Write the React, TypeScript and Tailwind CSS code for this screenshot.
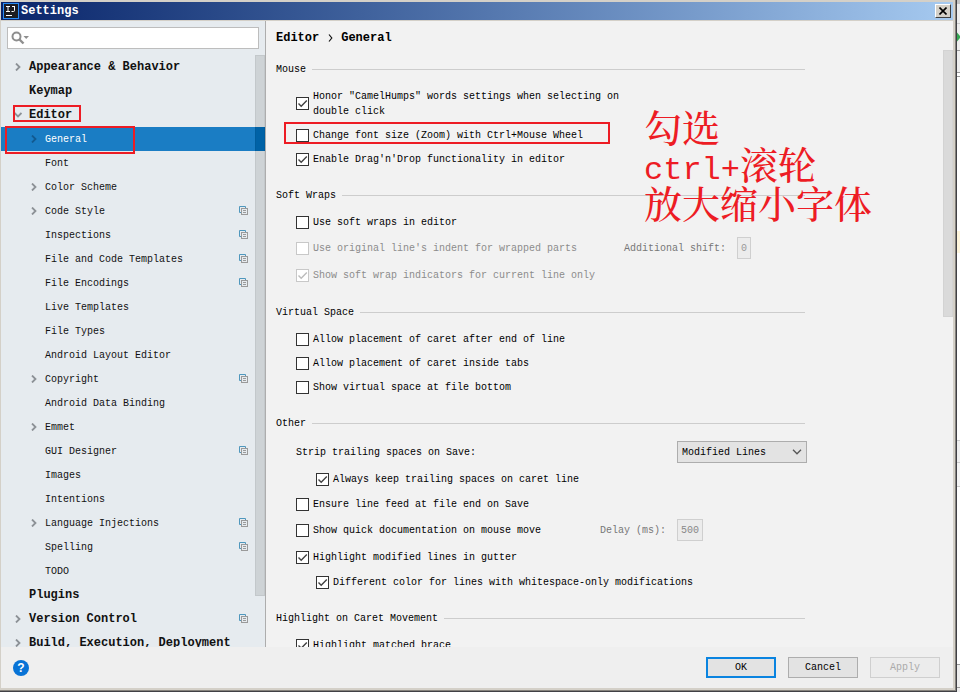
import type { ReactNode } from "react";

type Node = { label: string; level: 0 | 1; arrow?: "right" | "down"; copy?: boolean; selected?: boolean };

const tree: Node[] = [
  { label: "Appearance & Behavior", level: 0, arrow: "right" },
  { label: "Keymap", level: 0 },
  { label: "Editor", level: 0, arrow: "down" },
  { label: "General", level: 1, arrow: "right", selected: true },
  { label: "Font", level: 1 },
  { label: "Color Scheme", level: 1, arrow: "right" },
  { label: "Code Style", level: 1, arrow: "right", copy: true },
  { label: "Inspections", level: 1, copy: true },
  { label: "File and Code Templates", level: 1, copy: true },
  { label: "File Encodings", level: 1, copy: true },
  { label: "Live Templates", level: 1 },
  { label: "File Types", level: 1 },
  { label: "Android Layout Editor", level: 1 },
  { label: "Copyright", level: 1, arrow: "right", copy: true },
  { label: "Android Data Binding", level: 1 },
  { label: "Emmet", level: 1, arrow: "right" },
  { label: "GUI Designer", level: 1, copy: true },
  { label: "Images", level: 1 },
  { label: "Intentions", level: 1 },
  { label: "Language Injections", level: 1, arrow: "right", copy: true },
  { label: "Spelling", level: 1, copy: true },
  { label: "TODO", level: 1 },
  { label: "Plugins", level: 0 },
  { label: "Version Control", level: 0, arrow: "right", copy: true },
  { label: "Build, Execution, Deployment", level: 0, arrow: "right" },
];

function Arrow({ dir, color }: { dir: "right" | "down"; color: string }) {
  return (
    <svg width="8" height="8" viewBox="0 0 8 8" fill="none" stroke={color} strokeWidth="1.8" aria-hidden="true">
      <path d={dir === "right" ? "M2 0.5 L5.5 4 L2 7.5" : "M0.5 2 L4 5.5 L7.5 2"} />
    </svg>
  );
}

function CopyIcon() {
  return (
    <svg width="9" height="10" viewBox="0 0 9 10" fill="none" className="block" aria-hidden="true">
      <path d="M2 6.5 H0.5 V0.5 H6.5 V2" stroke="#4f97bd" />
      <rect x="2.5" y="2.5" width="6" height="6" stroke="#9a9a9a" />
      <path d="M4 4.5 H7 M4 6.5 H7" stroke="#9a9a9a" />
    </svg>
  );
}

function TreeRow({ node }: { node: Node }) {
  const weight = node.level === 0 ? "text-xs font-bold pl-3" : "pl-7";
  const tone = node.selected ? "bg-[#1a7dc4] text-white" : "text-[#111]";
  return (
    <li className={`relative flex h-6 items-center ${weight} ${tone}`}>
      <span className="flex w-4 shrink-0 items-center pl-px">
        {node.arrow && <Arrow dir={node.arrow} color={node.selected ? "#125a90" : "#8c9196"} />}
      </span>
      <span className="flex-1 whitespace-nowrap">{node.label}</span>
      {node.copy && (
        <span className="mr-[17px]">
          <CopyIcon />
        </span>
      )}
      {node.selected && <span className="h-full w-[10px] bg-[#006eb9]" />}
      {node.label === "Editor" && (
        <span className="pointer-events-none absolute top-[2px] left-3 h-[17px] w-[68px] border-2 border-[#ed1c24]" />
      )}
      {node.selected && (
        <span className="pointer-events-none absolute -top-px left-1 z-10 h-7 w-[130px] border-2 border-[#ed1c24]" />
      )}
    </li>
  );
}

function Check({ label, checked = false, disabled = false }: { label: ReactNode; checked?: boolean; disabled?: boolean }) {
  return (
    <label className={`flex items-center gap-1 ${disabled ? "text-[#8c8c8c]" : "text-black"}`}>
      <span className="relative size-[13px] shrink-0">
        <input
          type="checkbox"
          defaultChecked={checked}
          disabled={disabled}
          className={`peer block size-[13px] appearance-none border bg-white ${disabled ? "border-[#c8c8c8]" : "border-[#333]"}`}
        />
        <svg
          viewBox="0 0 13 13"
          className="pointer-events-none absolute inset-0 hidden size-[13px] peer-checked:block"
          fill="none"
          stroke={disabled ? "#bcbcbc" : "#404040"}
          strokeWidth="1.4"
          aria-hidden="true"
        >
          <path d="M2.5 6.5 L5.2 9.2 L10.8 3.6" />
        </svg>
      </span>
      <span>{label}</span>
    </label>
  );
}

function Group({ title, children }: { title: string; children: ReactNode }) {
  return (
    <section className="mt-4">
      <div className="flex h-4 items-center gap-[6px]">
        <h2 className="whitespace-nowrap text-black">{title}</h2>
        <div className="h-px flex-1 bg-[#cdcdcd]" />
      </div>
      <div className="pt-[7px] pl-5">{children}</div>
    </section>
  );
}

function Row({ h = "h-6", children }: { h?: string; children: ReactNode }) {
  return <div className={`flex items-center whitespace-nowrap ${h}`}>{children}</div>;
}

export default function App() {
  return (
    <div className="flex h-screen overflow-hidden bg-white font-['Liberation_Mono','Noto_Sans_CJK_SC',monospace] text-[10px] leading-[15px]">
      <div className="flex min-w-0 flex-1 flex-col border-r border-b border-[#404045] bg-[#d4d0c8] pt-[2px] pr-[3px] pb-[3px] pl-px shadow-[inset_-1px_-1px_#85827c]">
        <header className="mb-px flex h-[18px] shrink-0 items-center bg-linear-to-r from-[#0a246a] to-[#a6caf0] px-[2px]">
          <svg width="16" height="16" viewBox="0 0 16 16" fill="none" aria-hidden="true">
            <rect width="16" height="16" fill="#2a8cf5" />
            <rect x="1" y="1" width="14" height="14" fill="#1c1c22" />
            <path d="M3 3.5 H7 M5 3.5 V8.5 M3 8.5 H7 M9 3.5 H12 M11.5 3.5 V7.5 Q11.5 8.5 10.5 8.5 H8.5" stroke="#fff" />
            <path d="M3 12.5 H9" stroke="#fff" />
          </svg>
          <h1 className="ml-[2px] flex-1 text-xs font-bold text-white">Settings</h1>
          <button
            type="button"
            aria-label="Close"
            className="flex h-[14px] w-4 items-center justify-center border border-t-white border-r-[#404040] border-b-[#404040] border-l-white bg-[#d4d0c8]"
          >
            <svg width="8" height="8" viewBox="0 0 8 8" stroke="#000" strokeWidth="1.6" aria-hidden="true">
              <path d="M0.5 0.5 L7.5 7.5 M7.5 0.5 L0.5 7.5" />
            </svg>
          </button>
        </header>

        <div className="flex min-h-0 flex-1">
          <aside className="relative flex w-[265px] shrink-0 flex-col overflow-hidden border-r border-[#adadad] bg-[#e6ebef]">
            <div className="m-[6px] flex h-[22px] shrink-0 items-center border border-[#bdbdbd] bg-white pl-[3px]">
              <svg width="19" height="14" viewBox="0 0 19 14" fill="none" aria-hidden="true">
                <circle cx="5.5" cy="5.5" r="4" stroke="#8e8e8e" strokeWidth="2" />
                <path d="M8.5 8.5 L12.5 12.5" stroke="#8e8e8e" strokeWidth="2.4" />
                <path d="M12.5 5 H18 L15.2 8 Z" fill="#8e8e8e" />
              </svg>
              <input type="search" aria-label="Search settings" className="h-full min-w-0 flex-1 bg-transparent outline-none" />
            </div>
            <div className="relative min-h-0 flex-1 overflow-hidden">
              <ul>
                {tree.map((node) => (
                  <TreeRow key={node.label} node={node} />
                ))}
              </ul>
              <div className="absolute top-0 right-0 h-[541px] w-[10px] border border-black/5 bg-black/10" />
            </div>
          </aside>

          <main className="relative min-w-0 flex-1 overflow-hidden bg-[#f2f2f2] pr-[148px] pl-[10px]">
            <nav aria-label="Breadcrumb" className="mt-[10px] flex h-[14px] items-center gap-2 text-xs font-bold">
              <span>Editor</span>
              <svg width="6" height="8" viewBox="0 0 6 8" fill="none" stroke="#111" strokeWidth="1.2" aria-hidden="true">
                <path d="M2 0.5 L4.8 4 L2 7.5" />
              </svg>
              <span>General</span>
            </nav>

            <Group title="Mouse">
              <Row h="h-[39px]">
                <Check
                  checked
                  label={
                    <>
                      Honor "CamelHumps" words settings when selecting on
                      <br />
                      double click
                    </>
                  }
                />
              </Row>
              <div className="relative">
                <Row>
                  <Check label="Change font size (Zoom) with Ctrl+Mouse Wheel" />
                </Row>
                <span className="pointer-events-none absolute -top-px -left-3 h-[22px] w-[326px] border-2 border-[#ed1c24]" />
              </div>
              <Row>
                <Check checked label="Enable Drag'n'Drop functionality in editor" />
              </Row>
            </Group>

            <Group title="Soft Wraps">
              <Row>
                <Check label="Use soft wraps in editor" />
              </Row>
              <Row h="h-7">
                <Check disabled label="Use original line's indent for wrapped parts" />
                <label className="ml-[47px] flex items-center gap-[11px] text-[#777]">
                  Additional shift:
                  <input disabled defaultValue="0" className="h-[22px] w-[14px] border border-[#cfcfcf] bg-[#ececec] text-center text-[#999]" />
                </label>
              </Row>
              <Row h="h-[26px]">
                <Check checked disabled label="Show soft wrap indicators for current line only" />
              </Row>
            </Group>

            <Group title="Virtual Space">
              <Row>
                <Check label="Allow placement of caret after end of line" />
              </Row>
              <Row>
                <Check label="Allow placement of caret inside tabs" />
              </Row>
              <Row>
                <Check label="Show virtual space at file bottom" />
              </Row>
            </Group>

            <Group title="Other">
              <Row h="h-7">
                <label htmlFor="strip" className="flex-1">
                  Strip trailing spaces on Save:
                </label>
                <span className="relative -mr-[2px]">
                  <select id="strip" className="block h-[22px] w-[130px] appearance-none border border-[#adadad] bg-[#e3e3e3] pl-1 text-black">
                    <option>Modified Lines</option>
                  </select>
                  <svg
                    width="10"
                    height="6"
                    viewBox="0 0 10 6"
                    fill="none"
                    stroke="#555"
                    strokeWidth="1.3"
                    className="pointer-events-none absolute top-2 right-[5px]"
                    aria-hidden="true"
                  >
                    <path d="M1 0.8 L5 4.8 L9 0.8" />
                  </svg>
                </span>
              </Row>
              <div className="pl-5">
                <Row h="h-[26px]">
                  <Check checked label="Always keep trailing spaces on caret line" />
                </Row>
              </div>
              <Row>
                <Check label="Ensure line feed at file end on Save" />
              </Row>
              <Row h="h-7">
                <Check label="Show quick documentation on mouse move" />
                <label className="ml-[59px] flex items-center gap-[11px] text-[#777]">
                  Delay (ms):
                  <input disabled defaultValue="500" className="h-[22px] w-[26px] border border-[#cfcfcf] bg-[#ececec] text-center text-[#888]" />
                </label>
              </Row>
              <Row h="h-[26px]">
                <Check checked label="Highlight modified lines in gutter" />
              </Row>
              <div className="pl-5">
                <Row>
                  <Check checked label="Different color for lines with whitespace-only modifications" />
                </Row>
              </div>
            </Group>

            <Group title="Highlight on Caret Movement">
              <Row>
                <Check checked label="Highlight matched brace" />
              </Row>
            </Group>

            <div className="absolute top-[29px] right-0 h-[267px] w-[10px] border border-[#d3d3d3] bg-[#dadada]" />

            <div className="absolute top-[92px] left-[378px] font-['Liberation_Mono','Noto_Serif_CJK_SC','Noto_Sans_CJK_SC',serif] text-[38px] leading-[37px] font-medium whitespace-nowrap text-[#ed1c24]">
              <p>勾选</p>
              <p>
                <span className="text-[32px]">ctrl+</span>滚轮
              </p>
              <p>放大缩小字体</p>
            </div>
          </main>
        </div>

        <footer className="flex h-[41px] shrink-0 items-center gap-3 bg-[#efefef] pr-[13px] pl-3">
          <button type="button" aria-label="Help" className="mr-auto flex size-4 items-center justify-center rounded-full bg-[#0873d6] font-['Liberation_Sans',sans-serif] text-xs font-bold text-white">
            ?
          </button>
          <button type="button" className="h-[21px] w-[70px] border-2 border-[#0a84e0] bg-[#e3e3e3] text-black">
            OK
          </button>
          <button type="button" className="h-[21px] w-[70px] border border-[#adadad] bg-[#e3e3e3] text-black">
            Cancel
          </button>
          <button type="button" disabled className="h-[21px] w-[70px] border border-[#cfcfcf] bg-[#ececec] text-[#aaa]">
            Apply
          </button>
        </footer>
      </div>

      <div className="flex w-[3px] shrink-0 flex-col" aria-hidden="true">
        <div className="h-1 bg-[#c4c4c4]" />
        <div className="h-5 border-b border-[#ccc] bg-[#eee]" />
        <div className="h-[27px] border-b border-[#999] bg-[#eee] pt-2">
          <svg width="3" height="10" viewBox="0 0 3 10" className="block">
            <path d="M0 0.5 L3 4 V6 L0 9.5 Z" fill="#35a853" />
          </svg>
        </div>
        <div className="h-[22px] border-b border-[#999] bg-[#eee]" />
        <div className="h-1 border-b border-[#999]" />
        <div className="h-[154px]" />
        <div className="h-[22px] bg-[#fff6dc]" />
        <div className="h-[187px]" />
        <div className="h-[23px] border-y border-[#ccc] bg-[#f0f0f0]" />
        <div className="h-6 border-b border-[#ccc] bg-[#f5f5f5]" />
        <div className="flex-1" />
        <div className="h-[23px] border-t border-[#999] bg-[#eee]" />
        <div className="h-[5px] border-t border-[#999] bg-[#eee]" />
      </div>
    </div>
  );
}
